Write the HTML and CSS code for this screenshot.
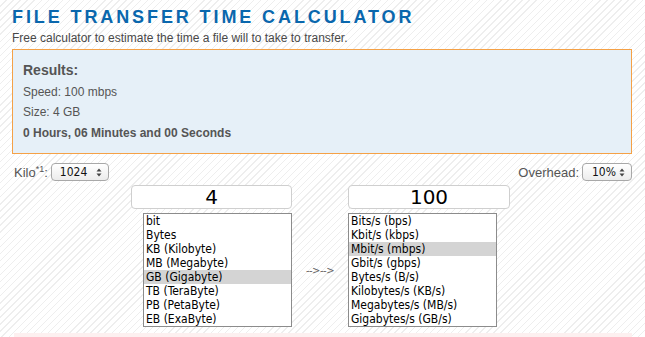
FILE: index.html
```html
<!DOCTYPE html>
<html>
<head>
<meta charset="utf-8">
<link rel="stylesheet" href="styles.css">
</head>
<body>
<div class="page">
  <h1 class="title">FILE TRANSFER TIME CALCULATOR</h1>
  <p class="subtitle">Free calculator to estimate the time a file will to take to transfer.</p>
  <div class="results">
    <div class="res-head">Results:</div>
    <div class="res-line">Speed: 100 mbps</div>
    <div class="res-line">Size: 4 GB</div>
    <div class="res-line res-bold">0 Hours, 06 Minutes and 00 Seconds</div>
  </div>
  <div class="options">
    <div class="opt">
      <span class="opt-label">Kilo<sup>*1</sup>:</span>
      <span class="popup popup-kilo"><span class="popup-val">1024</span>
        <svg class="updown" width="6" height="9" viewBox="0 0 6 9"><path d="M3 0.5 L5.5 3.5 H0.5 Z M3 8.5 L5.5 5.5 H0.5 Z" fill="#444"/></svg>
      </span>
    </div>
    <div class="opt">
      <span class="opt-label">Overhead:</span>
      <span class="popup popup-over"><span class="popup-val">10%</span>
        <svg class="updown" width="6" height="9" viewBox="0 0 6 9"><path d="M3 0.5 L5.5 3.5 H0.5 Z M3 8.5 L5.5 5.5 H0.5 Z" fill="#444"/></svg>
      </span>
    </div>
  </div>
  <div class="converter">
    <div class="cell left"><div class="num">4</div></div>
    <div class="cell"></div>
    <div class="cell right"><div class="num">100</div></div>
    <div class="cell left">
      <div class="list list-left">
        <div class="item">bit</div>
        <div class="item">Bytes</div>
        <div class="item">KB (Kilobyte)</div>
        <div class="item">MB (Megabyte)</div>
        <div class="item sel">GB (Gigabyte)</div>
        <div class="item">TB (TeraByte)</div>
        <div class="item">PB (PetaByte)</div>
        <div class="item">EB (ExaByte)</div>
      </div>
    </div>
    <div class="cell arrow">--&gt;--&gt;</div>
    <div class="cell right">
      <div class="list list-right">
        <div class="item">Bits/s (bps)</div>
        <div class="item">Kbit/s (kbps)</div>
        <div class="item sel">Mbit/s (mbps)</div>
        <div class="item">Gbit/s (gbps)</div>
        <div class="item">Bytes/s (B/s)</div>
        <div class="item">Kilobytes/s (KB/s)</div>
        <div class="item">Megabytes/s (MB/s)</div>
        <div class="item">Gigabytes/s (GB/s)</div>
      </div>
    </div>
  </div>
  <div class="next"></div>
</div>
</body>
</html>
```

FILE: styles.css
```css
html, body {
  margin: 0;
  padding: 0;
}
body {
  background-color: #ffffff;
  background-image: repeating-linear-gradient(135deg, #ffffff 0px, #ffffff 4px, #eeeeee 4px, #eeeeee 5px);
  font-family: "Liberation Sans", Arial, sans-serif;
  color: #444;
  height: 337px;
  overflow: hidden;
}
.page {
  padding: 0 13px 0 12px;
}
.title {
  margin: 0;
  padding-top: 7px;
  font-size: 18px;
  line-height: 20px;
  font-weight: bold;
  letter-spacing: 2.9px;
  color: #0a67ad;
}
.subtitle {
  margin: 4px 0 0 0;
  font-size: 12px;
  line-height: 14px;
  color: #484848;
}
.results {
  margin-top: 4px;
  height: 105px;
  box-sizing: border-box;
  border: 1px solid #f5a146;
  background: #e6f0f8;
  padding: 12px 10px 0 10px;
  color: #555;
}
.res-head {
  font-size: 14px;
  font-weight: bold;
  line-height: 16px;
}
.res-line {
  font-size: 12px;
  line-height: 14px;
  margin-top: 6.6px;
}
.res-bold {
  font-weight: bold;
}
.options {
  margin-top: 9px;
  display: flex;
  justify-content: space-between;
  align-items: center;
  height: 18px;
}
.opt {
  display: flex;
  align-items: center;
  gap: 3px;
}
.opt-label {
  font-size: 13px;
  color: #555;
  margin-left: 2px;
}
.opt-label sup {
  font-size: 9px;
  line-height: 0;
  vertical-align: 5px;
}
.popup {
  display: flex;
  align-items: center;
  justify-content: space-between;
  box-sizing: border-box;
  height: 18px;
  border: 1px solid #a8a8a8;
  border-radius: 4px;
  background: linear-gradient(#ffffff, #ececec);
  font-family: "DejaVu Sans Condensed", "DejaVu Sans", Verdana, sans-serif;
  font-size: 12px;
  color: #111;
  padding: 0 6px 0 8px;
}
.popup-kilo {
  width: 58px;
}
.popup-over {
  width: 50px;
  padding-left: 9px;
}
.converter {
  margin-top: 4px;
  margin-left: 119px;
  display: grid;
  grid-template-columns: 161px 56px 162px;
  grid-template-rows: 24px 114px;
  row-gap: 4px;
}
.cell.left {
  display: flex;
  justify-content: flex-end;
}
.cell.right {
  display: flex;
  justify-content: flex-start;
}
.num {
  width: 100%;
  box-sizing: border-box;
  height: 24px;
  border: 1px solid #cfcfcf;
  border-radius: 4px;
  background: #ffffff;
  text-align: center;
  font-family: "DejaVu Sans", Verdana, sans-serif;
  font-size: 20px;
  line-height: 22px;
  color: #000;
}
.list {
  width: 149px;
  height: 114px;
  box-sizing: border-box;
  border: 1px solid #8c8c8c;
  background: #fff;
  font-family: "DejaVu Sans Condensed", "DejaVu Sans", Verdana, sans-serif;
  font-size: 12px;
  color: #000;
}
.item {
  height: 14px;
  line-height: 14px;
  padding-left: 2px;
  white-space: nowrap;
}
.item.sel {
  background: #d4d4d4;
}
.arrow {
  display: flex;
  align-items: center;
  justify-content: center;
  font-family: "DejaVu Sans", Verdana, sans-serif;
  font-size: 10px;
  color: #666;
  letter-spacing: -0.5px;
}
.next {
  margin-top: 6px;
  height: 10px;
  margin-left: 2px;
  background: #fdf0f0;
}
```
